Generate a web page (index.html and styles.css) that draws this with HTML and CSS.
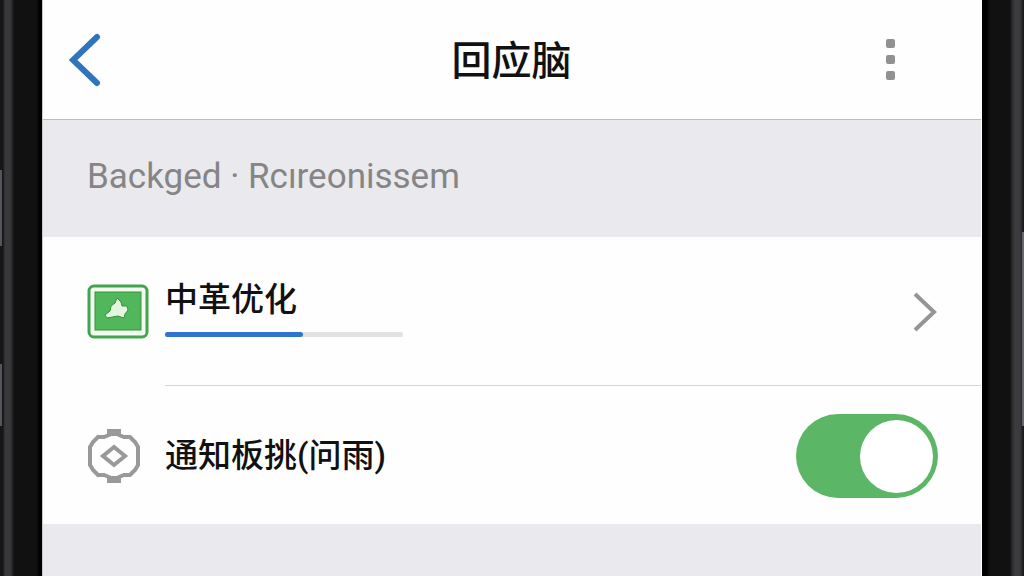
FILE: index.html
```html
<!DOCTYPE html>
<html lang="zh-CN">
<head>
    <meta charset="UTF-8">
    <meta name="viewport" content="width=device-width, initial-scale=1.0">
    <title>回应脑</title>
    <link rel="stylesheet" href="styles.css">
</head>
<body>
    <div class="phone">
        <div class="bezel bezel-left">
            <span class="side-key key-top"></span>
            <span class="side-key key-bottom"></span>
        </div>

        <main class="screen">
            <header class="nav-bar">
                <button class="icon-button" type="button" aria-label="返回">
                    <svg width="32" height="54" viewBox="0 0 32 54">
                        <path d="M28 4 L4 27 L28 50" fill="none" stroke="#2f74bd" stroke-width="6" stroke-linecap="round"/>
                    </svg>
                </button>
                <h1>回应脑</h1>
                <button class="icon-button menu-button" type="button" aria-label="更多">
                    <svg width="10" height="42" viewBox="0 0 10 42" fill="#919191">
                        <rect x="0" y="0" width="9" height="9" rx="2"/>
                        <rect x="0" y="16" width="9" height="9" rx="2"/>
                        <rect x="0" y="32" width="9" height="9" rx="2"/>
                    </svg>
                </button>
            </header>

            <h2 class="section-title">Backged · Rcıreonissem</h2>

            <section class="list">
                <a class="row row-link" href="#">
                    <svg class="row-icon" width="62" height="56" viewBox="0 0 62 56">
                        <rect x="2" y="2" width="58" height="51" rx="5" fill="#f3fbf1" stroke="#43a34e" stroke-width="3"/>
                        <rect x="8" y="8" width="46" height="38" fill="#50b75b" stroke="#37913f" stroke-width="1"/>
                        <path d="M30 14 L34 18 L35 22 L40 22 L41 26 L38 30 L37 34 L31 32 L20 34 L18 31 L23 27 L24 22 L28 19 Z" fill="#e4f6e0" stroke="#37913f" stroke-width="1"/>
                    </svg>
                    <span class="row-body">
                        <span class="row-label">中革优化</span>
                        <span class="progress"><span class="progress-fill" style="width: 58%"></span></span>
                    </span>
                    <svg class="chevron" width="26" height="42" viewBox="0 0 26 42">
                        <path d="M3 3 L22 21 L3 39" fill="none" stroke="#959595" stroke-width="4"/>
                    </svg>
                </a>

                <div class="row row-toggle">
                    <svg class="row-icon" width="54" height="56" viewBox="0 0 54 56" fill="none" stroke="#999">
                        <path d="M22 3 H32 V7 L37 9 H43 L48 14 L51 19 V37 L48 42 L43 47 H37 L32 49 V53 H22 V49 L17 47 H11 L6 42 L3 37 V19 L6 14 L11 9 H17 L22 7 Z" stroke-width="4"/>
                        <path d="M23 6 H31" stroke-width="4"/>
                        <path d="M23 50 H31" stroke-width="4"/>
                        <path d="M27 19 L38 28 L27 37 L16 28 Z" stroke-width="4"/>
                    </svg>
                    <label class="row-label" for="notify">通知板挑(问雨)</label>
                    <input class="switch" id="notify" type="checkbox" checked>
                </div>
            </section>
        </main>

        <div class="bezel bezel-right">
            <span class="side-key key-power"></span>
        </div>
    </div>
</body>
</html>
```
FILE: styles.css
```css
* {
    margin: 0;
    padding: 0;
    box-sizing: border-box;
}

body {
    font-family: Roboto, "Noto Sans CJK SC", sans-serif;
    background: #111;
    color: #111;
}

.phone {
    display: flex;
    min-height: 100vh;
}

.screen {
    flex: 1;
    background: #eae9ee;
    border-left: 1px solid #c8c8ca;
    border-right: 1px solid #fff;
}

/* phone frame */
.bezel {
    position: relative;
    flex: none;
    width: 42px;
}

.bezel-left {
    background: linear-gradient(to right, #161618 0 3px, #38383b 5px 10px, #29292c 12px, #111 14px 36px, #000 40px);
}

.bezel-right {
    background: linear-gradient(to right, #000 0 4px, #111 8px 28px, #29292b 30px, #3b3b3e 33px 38px, #1b1b1e 41px);
}

.side-key {
    position: absolute;
    width: 2px;
    background: #55555b;
}

.key-top {
    left: 0;
    top: 170px;
    height: 76px;
}

.key-bottom {
    left: 0;
    top: 364px;
    height: 62px;
}

.key-power {
    right: 0;
    top: 232px;
    height: 194px;
    background: #66666e;
}

/* top bar */
.nav-bar {
    display: flex;
    align-items: center;
    justify-content: space-between;
    height: 120px;
    padding: 0 85px 0 26px;
    background: #fefefe;
    border-bottom: 1px solid #bdbdbf;
}

.nav-bar h1 {
    padding-top: 4px;
    font-size: 40px;
    font-weight: 500;
    line-height: 60px;
}

.icon-button {
    display: flex;
    width: 68px;
    border: none;
    background: none;
    cursor: pointer;
}

.menu-button {
    width: 10px;
}

.section-title {
    padding: 33px 44px 36px;
    font-size: 35px;
    font-weight: 400;
    line-height: 48px;
    color: #858585;
}

/* settings list */
.list {
    background: #fefefe;
}

.row {
    position: relative;
    display: flex;
    align-items: center;
    padding: 0 43px 0 44px;
    color: #111;
    text-decoration: none;
}

.row-link {
    height: 149px;
}

.row-link::after {
    content: "";
    position: absolute;
    left: 122px;
    right: 0;
    bottom: 0;
    height: 1px;
    background: #d4d4d6;
}

.row-toggle {
    height: 138px;
    padding-top: 2px;
}

.row-icon {
    flex: none;
    margin-right: 16px;
}

.row-toggle .row-icon {
    margin-right: 24px;
}

.row-body {
    flex: 1;
    padding-bottom: 10px;
}

.row-label {
    display: block;
    font-size: 33px;
    font-weight: 500;
    line-height: 48px;
}

.row-toggle .row-label {
    flex: 1;
}

.progress {
    display: block;
    width: 238px;
    height: 5px;
    margin-top: 8px;
    border-radius: 2px;
    background: #e2e2e3;
}

.progress-fill {
    display: block;
    height: 5px;
    border-radius: 3px;
    background: #2f74cf;
}

.switch {
    appearance: none;
    flex: none;
    display: flex;
    align-items: center;
    width: 142px;
    height: 84px;
    padding: 5px;
    border-radius: 42px;
    background: #ccc;
    cursor: pointer;
}

.switch::before {
    content: "";
    width: 73px;
    height: 73px;
    border-radius: 50%;
    background: #fff;
}

.switch:checked {
    justify-content: flex-end;
    background: #5bb765;
}
```
